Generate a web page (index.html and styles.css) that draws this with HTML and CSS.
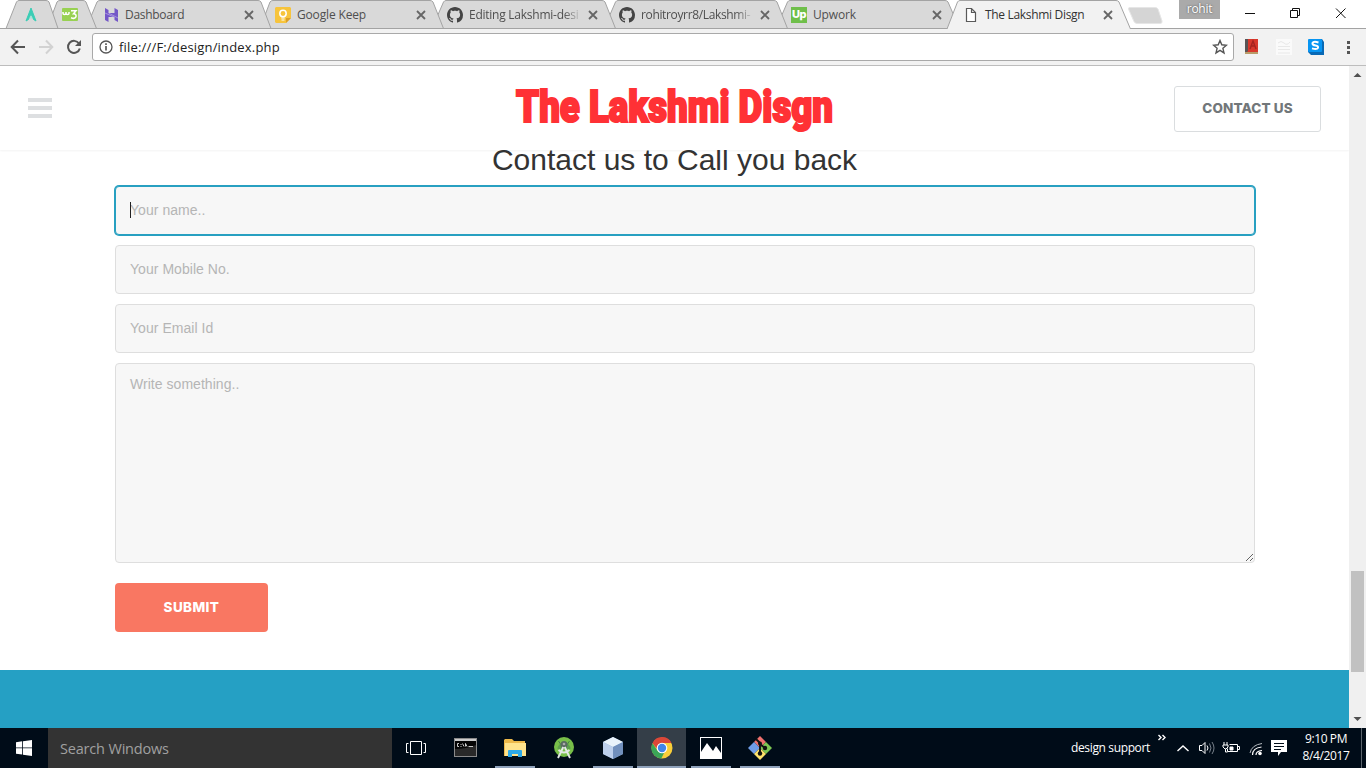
FILE: index.html
```html
<!DOCTYPE html>
<html lang="en">
<head>
<meta charset="utf-8">
<title>The Lakshmi Disgn</title>
<link rel="stylesheet" href="styles.css">
</head>
<body>
<svg width="0" height="0" class="defs">
  <symbol id="close" viewBox="0 0 10 10"><path d="M1 1l8 8M9 1L1 9" fill="none" stroke="currentColor" stroke-width="1.8"/></symbol>
  <symbol id="github" viewBox="0 0 16 16"><path fill="#444" d="M8 0C3.58 0 0 3.58 0 8c0 3.54 2.29 6.53 5.47 7.59.4.07.55-.17.55-.38 0-.19-.01-.82-.01-1.49-2.01.37-2.53-.49-2.69-.94-.09-.23-.48-.94-.82-1.13-.28-.15-.68-.52-.01-.53.63-.01 1.08.58 1.23.82.72 1.21 1.87.87 2.33.66.07-.52.28-.87.51-1.07-1.78-.2-3.64-.89-3.64-3.95 0-.87.31-1.59.82-2.15-.08-.2-.36-1.02.08-2.12 0 0 .67-.21 2.2.82.64-.18 1.32-.27 2-.27s1.36.09 2 .27c1.53-1.04 2.2-.82 2.2-.82.44 1.1.16 1.92.08 2.12.51.56.82 1.27.82 2.15 0 3.07-1.87 3.75-3.65 3.95.29.25.54.73.54 1.48 0 1.07-.01 1.93-.01 2.2 0 .21.15.46.55.38A8.01 8.01 0 0 0 16 8c0-4.42-3.58-8-8-8z"/></symbol>
</svg>
<div class="browser">
  <div class="tabstrip">
    <svg class="tab-shapes" width="1366" height="29" viewBox="0 0 1366 29">
      <g fill="#d9d9d9" stroke="#a3a3a3">
        <path d="M776 28.500L787.500 2Q788.500.5 790 .5H945Q947 .5 948 2L959.500 28.500z"/>
        <path d="M604 28.500L615.500 2Q616.500.5 618 .5H774Q776 .5 777 2L787.500 28.500z"/>
        <path d="M432 28.500L443.500 2Q444.500.5 446 .5H602Q604 .5 605 2L615.500 28.500z"/>
        <path d="M260 28.500L270 2Q271 .5 273 .5H430Q432 .5 433 2L443.500 28.500z"/>
        <path d="M86 28.500L97 2Q98 .5 100 .5H258Q260 .5 261 2L271 28.500z"/>
        <path d="M47 28.500L57 2Q58 .5 60 .5H83Q85 .5 86 2L96.500 28.500z"/>
        <path d="M6 28.500L16.500 2Q17.500.5 19 .5H46Q48 .5 49 2L58 28.500z"/>
      </g>
      <path d="M0 28.500H1366" stroke="#a3a3a3"/>
      <path d="M947 29L957.500 2Q958.500.5 960 .5H1116Q1118 .5 1119 2L1130.500 29" fill="#f2f2f2" stroke="#a3a3a3"/>
      <path d="M1130 7.500H1155Q1157 7.500 1158 9L1162 21Q1162.500 23.500 1160 23.500H1137Q1135 23.500 1134 21.500L1128.500 9Q1128 7.500 1130 7.500z" fill="#d5d5d5" stroke="#e6e6e6"/>
    </svg>
    <div class="tab pin"><svg width="16" height="16" viewBox="0 0 16 16"><path d="M8 1L3 14l2.500-1.500L8 7l2.500 5.500L13 14z" fill="#3bcdb5" stroke="#3bcdb5"/><path d="M8 8.500l-2 3h4z" fill="#a6e5da"/></svg></div>
    <div class="tab pin2"><svg width="16" height="16" viewBox="0 0 16 16"><rect y="1" width="16" height="13" rx="1" fill="#98d152"/><path d="M1 5v1.200q0 1.300 1.500 1.300T4 6.200V5m0 1.200q0 1.300 1.500 1.300T7 6.200V5M9 3.800h5l-2.500 3q3 0 2.500 3-1 2.500-5 1" fill="none" stroke="#fff" stroke-width="1.500"/></svg></div>
    <div class="tab"><svg width="15" height="16" viewBox="0 0 15 16"><path d="M1 1l3.500 2v3h6V1L14 3v12l-3.500-2v-3h-6v5L1 13z" fill="#7457c8"/><path d="M4.500 6L14 11M1 6l9 4" stroke="#b4a3e4" stroke-width=".8"/></svg><span class="title dash">Dashboard</span><svg class="x"><use href="#close"/></svg></div>
    <div class="tab t4"><svg width="16" height="16" viewBox="0 0 16 16"><path d="M1 0h14l1 1v10l-5 5H1l-1-1V1z" fill="#f7c43c"/><path d="M11 16v-5h5z" fill="#db9f28"/><circle cx="8" cy="6.500" r="3.200" fill="none" stroke="#fff" stroke-width="1.500"/><path d="M6.300 11h3.400M6.500 13h3" stroke="#fff"/></svg><span class="title">Google Keep</span><svg class="x"><use href="#close"/></svg></div>
    <div class="tab t4"><svg width="16" height="16"><use href="#github"/></svg><span class="title fade">Editing Lakshmi-desi</span><svg class="x"><use href="#close"/></svg></div>
    <div class="tab t4"><svg width="16" height="16"><use href="#github"/></svg><span class="title fade repo">rohitroyrr8/Lakshmi-</span><svg class="x"><use href="#close"/></svg></div>
    <div class="tab t7"><span class="upwork">Up</span><span class="title">Upwork</span><svg class="x"><use href="#close"/></svg></div>
    <div class="tab active"><svg width="14" height="16" viewBox="0 0 14 16"><path d="M2.500 1.500h5l4 4v9h-9zM7.500 1.500v4h4" fill="#fff" stroke="#5a5a5a" stroke-width="1.200"/></svg><span class="title">The Lakshmi Disgn</span><svg class="x"><use href="#close"/></svg></div>
    <div class="profile">rohit</div>
    <svg class="wincontrols" width="116" height="28" viewBox="1240 0 116 28" fill="none" stroke="#111"><path d="M1245 13.500h10M1290.500 10.500h7v7h-7zM1292.500 10.500v-2h7v7h-2M1336 8.500l9.500 9.500M1345.500 8.500l-9.500 9.500"/></svg>
  </div>
  <div class="toolbar">
    <svg class="nav" width="92" height="36" viewBox="0 29 92 36" fill="none" stroke-width="2">
      <path d="M25 47H12M18 40.500L11.700 47l6.300 6.500" stroke="#555"/>
      <path d="M39 47h13M46 40.500l6.300 6.500-6.300 6.500" stroke="#d2d2d2"/>
      <path d="M79 43.500a6 6 0 1 0 .8 5" stroke="#555"/><path d="M81 40v6h-6z" fill="#555"/>
    </svg>
    <div class="omnibox">
      <svg width="14" height="14" viewBox="0 0 14 14"><circle cx="7" cy="7" r="6" fill="none" stroke="#555" stroke-width="1.300"/><path d="M7 6v4.500M7 3.300v1.600" stroke="#444" stroke-width="1.500"/></svg>
      <span class="url">file:///F:/design/index.php</span>
      <svg class="star" width="16" height="16" viewBox="0 0 16 16"><path d="M8 1.500l1.800 4.300 4.700.4-3.600 3.100 1.100 4.600L8 11.400l-4 2.500 1.100-4.600L1.500 6.200l4.700-.4z" fill="none" stroke="#555" stroke-width="1.400"/></svg>
    </div>
    <svg class="extensions" width="132" height="36" viewBox="1234 29 132 36">
      <path d="M1245 39h13v14h-13z" fill="#d8382c"/><path d="M1245 39h3v12l-3 3z" fill="#595455"/><path d="M1245 52h13v2h-13z" fill="#b99c69"/><path d="M1250 49l3-8 3 8M1251 46h4" stroke="#a52420" stroke-width="1.400" fill="none"/>
      <rect x="1276" y="39" width="16" height="16" fill="#fafafa"/><path d="M1278 43q3-3 6 0t6-1M1278 46.500h12M1278 49.500h12M1278 53h12" fill="none" stroke="#e8e8e8" stroke-width="1"/>
      <path d="M1310 39h12l2 3v13h-13l-3-3V41z" fill="#0869b5"/><rect x="1308" y="39" width="14" height="13" rx="1" fill="#0795f2"/><path d="M1318.500 42.500q-5-1.500-6 .5-.5 2 3 2.400 3 .6 2.500 2.500-1 2-6 .5" stroke="#fff" stroke-width="2" fill="none"/>
      <path d="M1347 41h3v3h-3zM1347 46h3v3h-3zM1347 51h3v3h-3z" fill="#555"/>
    </svg>
  </div>
  <div class="viewport">
    <main class="page">
      <header class="site-header">
        <svg width="24" height="20"><path d="M0 2h24M0 10h24M0 18h24" stroke="#dddfe1" stroke-width="4"/></svg>
        <svg class="brand" width="330" height="64"><text x="6" y="43" textLength="317" lengthAdjust="spacingAndGlyphs">The Lakshmi Disgn</text></svg>
        <a class="contact-link"><span>CONTACT US</span></a>
      </header>
      <section class="contact">
        <h2>Contact us to Call you back</h2>
        <form>
          <div class="focused"><input type="text" placeholder="Your name.."><i class="caret"></i></div>
          <input type="text" placeholder="Your Mobile No.">
          <input type="text" placeholder="Your Email Id">
          <textarea placeholder="Write something.."></textarea>
          <button type="button">SUBMIT</button>
        </form>
      </section>
      <footer class="site-footer"></footer>
    </main>
    <div class="scrollbar">
      <svg width="17" height="17"><path d="M4.500 11h8l-4-4z" fill="#505050"/></svg>
      <div class="thumb"></div>
      <svg width="17" height="17"><path d="M4.500 6h8l-4 4z" fill="#505050"/></svg>
    </div>
  </div>
</div>
<div class="taskbar">
  <div class="start"><svg width="16" height="16" viewBox="0 0 16 16" fill="#fff"><path d="M0 2.200L6.200 1.300v6.200H0zM7 1.200L16 0v7.500H7zM0 8.300h6.200v6.200L0 13.700zM7 8.300h9V16l-9-1.300z"/></svg></div>
  <div class="search">Search Windows</div>
  <div class="apps">
    <div class="app first"><svg width="22" height="16" viewBox="0 0 22 16" fill="none" stroke="#fff"><path d="M5.500 1.500h11v13h-11zM3.500 3.500h-2v9h2M18.500 3.500h2v9h-2"/></svg></div>
    <div class="app"><svg width="23" height="20" viewBox="0 0 23 20"><rect x=".5" y=".5" width="22" height="18" fill="#050505" stroke="#8a8a8a"/><path d="M1 1h21v2H1z" fill="#ccc"/><path d="M1 11Q12 11 22 7v11H1z" fill="#292929"/><path d="M5 5.500H3.500v3H5M7 6v1M7 8v1M8.500 5.500l1.500 3M11.500 8.500v-3l1.500 3M14.500 8.500H19" fill="none" stroke="#ddd" stroke-width=".9"/></svg></div>
    <div class="app open"><svg width="22" height="20" viewBox="0 0 22 20"><path d="M0 2l1-1h7l2 2h11v15H0z" fill="#edb94a"/><path d="M1 5h21v13H1z" fill="#ffe38c"/><path d="M4 19v-6q0-1 1-1h12q1 0 1 1v6h-4v-3H8v3z" fill="#2da9e7"/></svg></div>
    <div class="app"><svg width="22" height="24" viewBox="0 0 22 24"><circle cx="11" cy="11" r="10" fill="#78bf49"/><path d="M5.500 5l2 3M16.500 5l-2 3" stroke="#468346"/><path d="M4.500 13a6.500 6.500 0 0 1 13 0z" fill="#5c9f4c"/><circle cx="11" cy="8.500" r="3.500" fill="#596b60"/><path d="M10.300 11L5 22M11.700 11L17 22M5.500 14q5.500 5 11 0" fill="none" stroke="#e4e8e5" stroke-width="1.900"/><circle cx="11" cy="8" r="1.300" fill="#aaa"/></svg></div>
    <div class="app open"><svg width="22" height="24" viewBox="0 0 22 24"><path d="M11 1l10 5v12l-10 5L1 18V6z" fill="#8aa8d1"/><path d="M11 1l10 5-10 5L1 6z" fill="#e9f3fb"/><path d="M1 6l10 5v12L1 18z" fill="#bdd0ec"/><path d="M11 11l10-5v12l-10 5z" fill="#7190bd"/></svg></div>
    <div class="app open current"><svg width="22" height="22" viewBox="0 0 22 22"><circle cx="11" cy="11" r="10.500" fill="#f9ce39"/><path d="M1.500 6.200A10.500 10.500 0 0 1 20.500 6H11L7 13z" fill="#dc4738"/><path d="M1.500 6.200L6.800 14l6.700 1-3.200 6.500A10.500 10.500 0 0 1 1.500 6.200z" fill="#3ba657"/><circle cx="11" cy="11" r="5.300" fill="#fff"/><circle cx="11" cy="11" r="4.200" fill="#4285e9"/></svg></div>
    <div class="app open"><svg width="22" height="22" viewBox="0 0 22 22"><rect x=".5" y=".5" width="21" height="21" fill="#000c18" stroke="#fff"/><path d="M1 21v-6L7 6l6 8 3-5 5 7v5z" fill="#fff"/></svg></div>
    <div class="app open"><svg width="24" height="24" viewBox="0 0 24 24"><path d="M12 0l6 6-6 6-6-6z" fill="#ef716e"/><path d="M6 6l6 6-6 6-6-6z" fill="#6f9de8"/><path d="M18 6l6 6-6 6-6-6z" fill="#7dc653"/><path d="M12 12l6 6-6 6-6-6z" fill="#ffe36b"/><path d="M8 3l4 4v10M12 8l5 4" fill="none" stroke="#111" stroke-width="1.900"/><circle cx="12" cy="7.500" r="2" fill="#111"/><circle cx="12" cy="17.500" r="2.200" fill="#111"/><circle cx="17" cy="12" r="2.200" fill="#111"/></svg></div>
  </div>
  <div class="tray">
    <span class="support">design support</span>
    <svg width="136" height="40" viewBox="1155 728 136 40" fill="none" stroke="#fff">
      <path d="M1158.500 735l2.500 2.500-2.500 2.500M1162.500 735l2.500 2.500-2.500 2.500" stroke-width="1.400"/>
      <path d="M1177.500 751l5.500-5 5.500 5" stroke-width="1.400"/>
      <path d="M1199.500 745.500h2.500l3-3v11l-3-3h-2.500zM1207 745.500q2 2.500 0 5"/><path d="M1209.500 743.500q3 4.500 0 9M1212 742q4 6 0 12" stroke="#77808a"/>
      <path d="M1229.500 744.500h8v7h-10v-3M1238 746.500h1.500v3h-1.500M1224 742v3M1227 742v3M1223 745h5v2l-2 2h-1l-2-2zM1225.500 749v3h2"/><path d="M1230 747h3v3h-3z" fill="#fff"/>
      <path d="M1252.500 755q0-7 9-8M1256 755q0-4 6-4.500" stroke-width="1.200"/><path d="M1250 753q1.500-8 12-9.500" stroke="#b4bac0"/><circle cx="1260" cy="753.500" r="1.800" fill="#fff" stroke="none"/>
      <path d="M1271 740h16v12h-6l-3 4v-4h-7z" fill="#fff" stroke="none"/><path d="M1274 743.500h10M1274 746.500h10M1274 749.500h7" stroke="#000c18"/>
    </svg>
    <div class="clock"><div>9:10 PM</div><div>8/4/2017</div></div>
    <i class="peek"></i>
  </div>
</div>
</body>
</html>
```
FILE: styles.css
```css
* { box-sizing: border-box; }
body { margin: 0; width: 1366px; height: 768px; overflow: hidden; background: #fff; font-family: "Open Sans", "Noto Sans", sans-serif; display: flex; flex-direction: column; }
svg { display: block; flex: none; }
.defs { position: absolute; }
.browser { height: 728px; display: flex; flex-direction: column; }
.tabstrip { position: relative; height: 29px; display: flex; padding-left: 23px; background: #fff; flex: none; }
.tab-shapes { position: absolute; left: 0; top: 0; }
.tab { position: relative; display: flex; align-items: center; width: 171px; height: 29px; gap: 6px; font-size: 12px; color: #4f4f4f; flex: none; }
.pin { width: 39px; }
.pin2 { width: 42px; }
.t4 { width: 172px; }
.t7 { width: 172px; }
.active { width: 178px; margin-left: 1px; color: #333; gap: 7px; }
.title { width: 118px; white-space: nowrap; letter-spacing: -.16px; }
.dash { letter-spacing: -.3px; }
.active .title { width: 116px; letter-spacing: -.32px; }
.fade { width: 118px; letter-spacing: -.25px; -webkit-mask-image: linear-gradient(90deg, #000 80%, transparent 96%); mask-image: linear-gradient(90deg, #000 80%, transparent 96%); }
.repo { letter-spacing: -.35px; }
.x { width: 10px; height: 10px; margin-left: -5px; color: #666; }
.upwork { width: 16px; height: 16px; background: #6fbf4a; color: #fff; font: 800 11px/15px Inter, sans-serif; letter-spacing: -.5px; text-align: center; }
.profile { position: relative; width: 41px; height: 19px; margin-left: 37px; background: #aaa; color: #fff; font-size: 12px; line-height: 18px; letter-spacing: -.3px; text-align: center; text-shadow: 0 0 2px #444; }
.wincontrols { position: relative; margin-left: 20px; }
.toolbar { height: 37px; flex: none; background: #f2f2f2; display: flex; border-bottom: 1px solid #bdbdbd; }
.omnibox { width: 1142px; height: 28px; margin-top: 4px; background: #fff; border: 1px solid #a9a9a9; border-radius: 3px; display: flex; align-items: center; padding: 0 5px 0 6px; }
.url { margin-left: 6px; font-size: 13px; letter-spacing: .18px; color: #222; }
.star { margin-left: auto; }
.viewport { height: 662px; display: flex; }
.page { width: 1349px; height: 662px; overflow: hidden; }
.site-header { position: relative; height: 84px; background: #fff; display: flex; justify-content: space-between; align-items: center; padding: 0 28px; box-shadow: 0 1px 2px rgba(0,0,0,.05); }
.brand { margin-left: 123px; margin-top: 6px; }
.brand text { font: 900 44px Roboto, sans-serif; fill: #ff3135; stroke: #ff3135; stroke-width: 2.2; }
.contact-link { width: 147px; height: 46px; margin-top: 2px; padding-bottom: 2px; border: 1px solid #dadddf; border-radius: 3px; display: flex; align-items: center; justify-content: center; font: 800 13.500px Inter, sans-serif; color: #72777a; letter-spacing: .12px; }
.contact { width: 1140px; margin: -7px auto 0 115px; }
h2 { margin: 0 0 10px; font: 30px/33px "Liberation Sans", Arial, sans-serif; color: #333; text-align: center; padding-right: 21px; }
form { display: flex; flex-direction: column; gap: 10px; }
.focused { position: relative; }
input, textarea { display: block; width: 100%; height: 49px; margin: 0; padding: 0 14px 2px; border: 1px solid #dedede; border-radius: 4px; background: #f7f7f7; font: 14px "Liberation Sans", Arial, sans-serif; letter-spacing: .04px; outline: none; }
input::placeholder, textarea::placeholder { color: #b5b5b5; }
.focused input { border-color: #28a0c1; box-shadow: 0 0 0 1px #28a0c1; }
.caret { position: absolute; left: 15px; top: 16px; width: 1px; height: 16px; background: #222; }
textarea { height: 200px; padding-top: 12px; resize: vertical; }
button { width: 153px; height: 49px; margin-top: 10px; padding: 0 0 2px; border: 0; border-radius: 4px; background: #f97762; color: #fff; font: 800 13.500px Inter, sans-serif; letter-spacing: .4px; }
.site-footer { height: 58px; margin-top: 38px; background: #25a0c4; }
.scrollbar { width: 17px; background: #f0f0f0; display: flex; flex-direction: column; }
.thumb { width: 13px; height: 101px; margin: 488px 2px 39px; background: #c1c1c1; flex: none; }
.taskbar { height: 40px; display: flex; background: #000c18; color: #fff; }
.start { width: 48px; display: flex; align-items: center; justify-content: center; }
.search { width: 344px; background: #333; color: #a0a0a0; font-size: 14.500px; line-height: 41px; padding-left: 12px; letter-spacing: -.18px; }
.apps { display: flex; }
.app { width: 49px; height: 40px; display: flex; align-items: center; justify-content: center; position: relative; }
.first { padding-right: 2px; }
.open::after { content: ""; position: absolute; left: 5px; right: 4px; bottom: 0; height: 2px; background: #8fa2bb; }
.current { background: #343e48; }
.current::after { left: 0; right: 0; }
.tray { margin-left: auto; display: flex; }
.support { font-size: 12px; line-height: 40px; width: 84px; white-space: nowrap; letter-spacing: -.36px; }
.clock { width: 70px; text-align: center; font-size: 12px; line-height: 17px; padding-top: 2px; letter-spacing: -.4px; }
.peek { width: 5px; border-left: 1px solid #5b646c; }
```
